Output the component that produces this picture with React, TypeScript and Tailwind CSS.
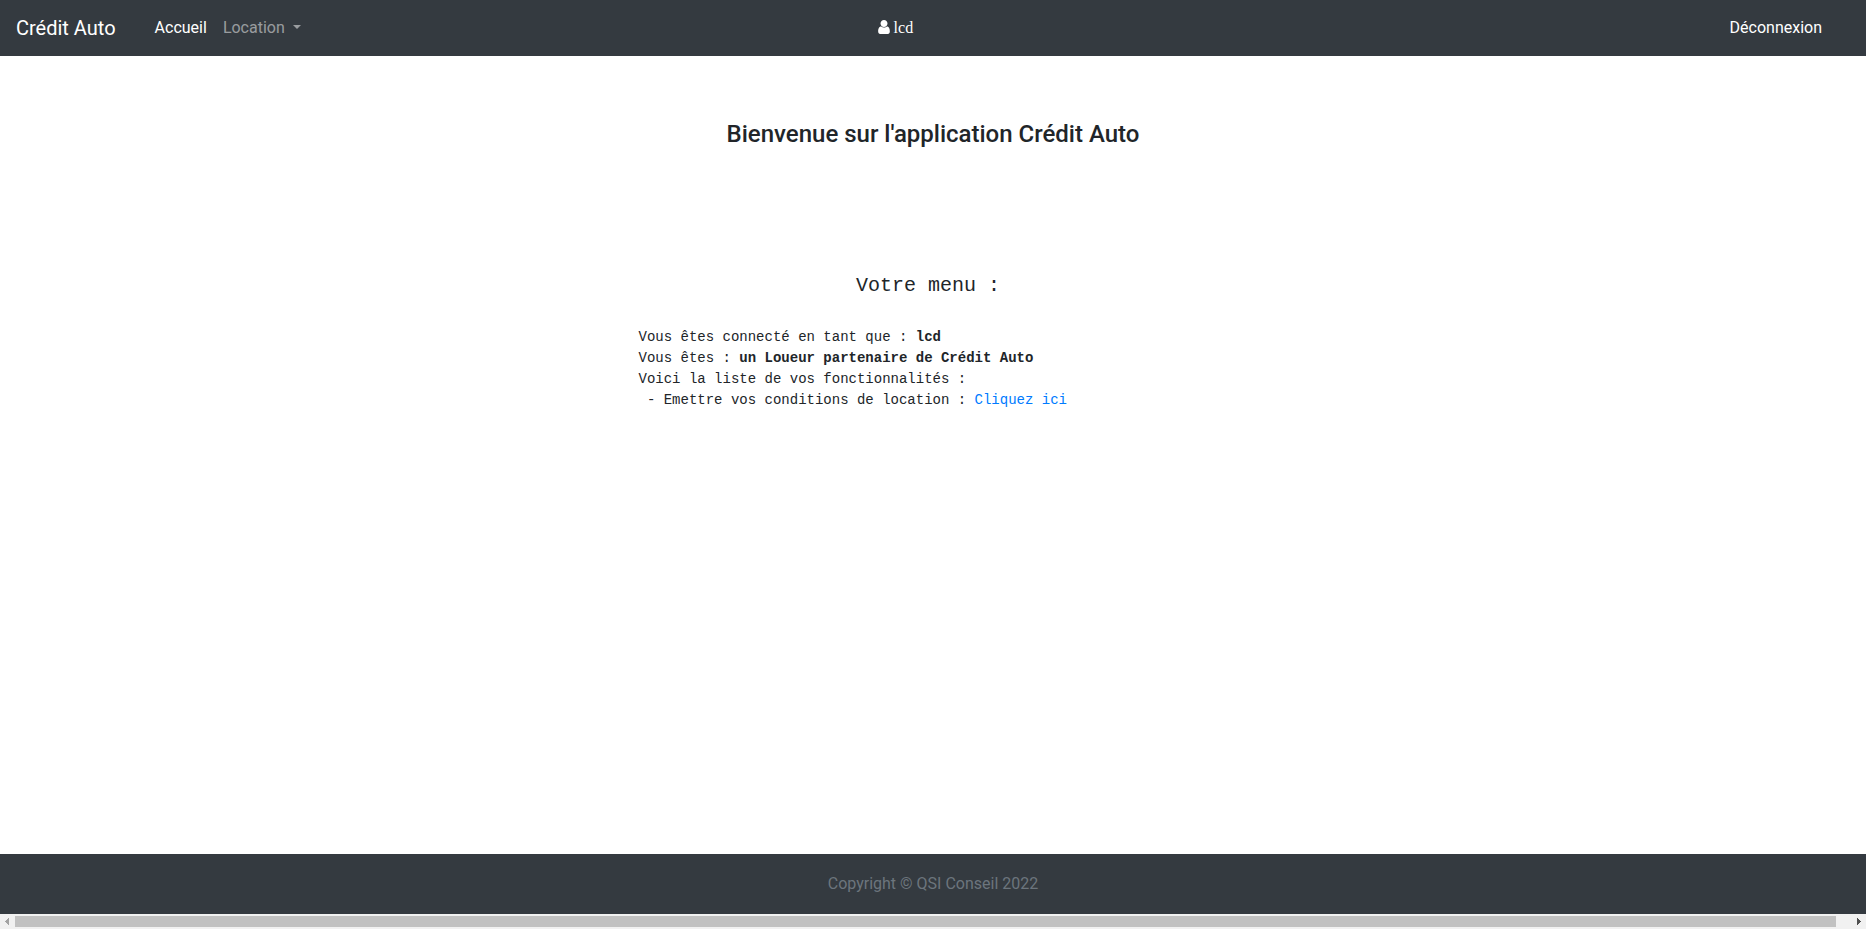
import React from "react";

function Navbar() {
  return (
    <nav className="flex h-14 shrink-0 items-center bg-[#343a40] px-4 text-base leading-6">
      <a className="mr-4 py-[5px] text-[20px] leading-[30px] text-white">Crédit Auto</a>
      <div className="ml-[15px] flex w-[731px] items-center">
        <a className="p-2 text-white">Accueil</a>
        <a className="flex items-center p-2 text-white/50">
          Location
          <span className="mb-[2px] ml-2 border-x-[4.8px] border-t-[4.8px] border-x-transparent border-t-current" />
        </a>
      </div>
      <div className="flex items-center gap-1 font-['Liberation_Serif',serif] text-white">
        <svg className="mb-[2px]" width="12" height="14" viewBox="0 0 1280 1536" fill="currentColor">
          <path d="M1280 1271c0 146-96 265-213 265H213C96 1536 0 1417 0 1271c0-262 65-567 327-567 81 79 191 128 313 128s232-49 313-128c262 0 327 305 327 567zM1024 384c0 212-172 384-384 384S256 596 256 384 428 0 640 0s384 172 384 384z" />
        </svg>
        lcd
      </div>
      <a className="mr-[28px] ml-auto text-white">Déconnexion</a>
    </nav>
  );
}

function ScrollBar() {
  return (
    <div className="flex h-[15px] shrink-0 items-center bg-[#f1f1f1]">
      <div className="flex w-[15px] pl-[5px]">
        <svg width="4" height="7" viewBox="0 0 4 7" fill="#a3a3a3" shapeRendering="crispEdges">
          <path d="M3 0h1v7H3V6H2V5H1V4H0V3h1V2h1V1h1z" />
        </svg>
      </div>
      <div className="mr-[15px] h-[11px] w-[1821px] bg-[#c1c1c1]" />
      <div className="flex w-[15px] pl-[6px]">
        <svg width="4" height="7" viewBox="0 0 4 7" fill="#505050" shapeRendering="crispEdges">
          <path d="M0 0h1v1h1v1h1v1h1v1H3v1H2v1H1v1H0z" />
        </svg>
      </div>
    </div>
  );
}

export default function App() {
  return (
    <div className="flex h-[929px] w-[1866px] flex-col overflow-hidden bg-white font-[Roboto,sans-serif] text-[#212529]">
      <Navbar />
      <main className="flex-1 pt-16">
        <h4 className="text-center text-2xl leading-[28.8px] font-medium">Bienvenue sur l'application Crédit Auto</h4>
        <div className="ml-[638.5px] pt-[125px] font-['Liberation_Mono',monospace] text-sm leading-[21px]">
          <h5 className="ml-[217.5px] text-[20px] leading-6">Votre menu :</h5>
          <pre className="mt-[29px] font-['Liberation_Mono',monospace]">
            {"Vous êtes connecté en tant que : "}<b>lcd</b>{"\nVous êtes : "}<b>un Loueur partenaire de Crédit Auto</b>
            {"\nVoici la liste de vos fonctionnalités :\n - Emettre vos conditions de location : "}
            <a className="text-[#007bff]">Cliquez ici</a>
          </pre>
        </div>
      </main>
      <footer className="flex h-[60px] shrink-0 items-center justify-center bg-[#343a40] text-base text-[#6c757d]">
        Copyright © QSI Conseil 2022
      </footer>
      <ScrollBar />
    </div>
  );
}
